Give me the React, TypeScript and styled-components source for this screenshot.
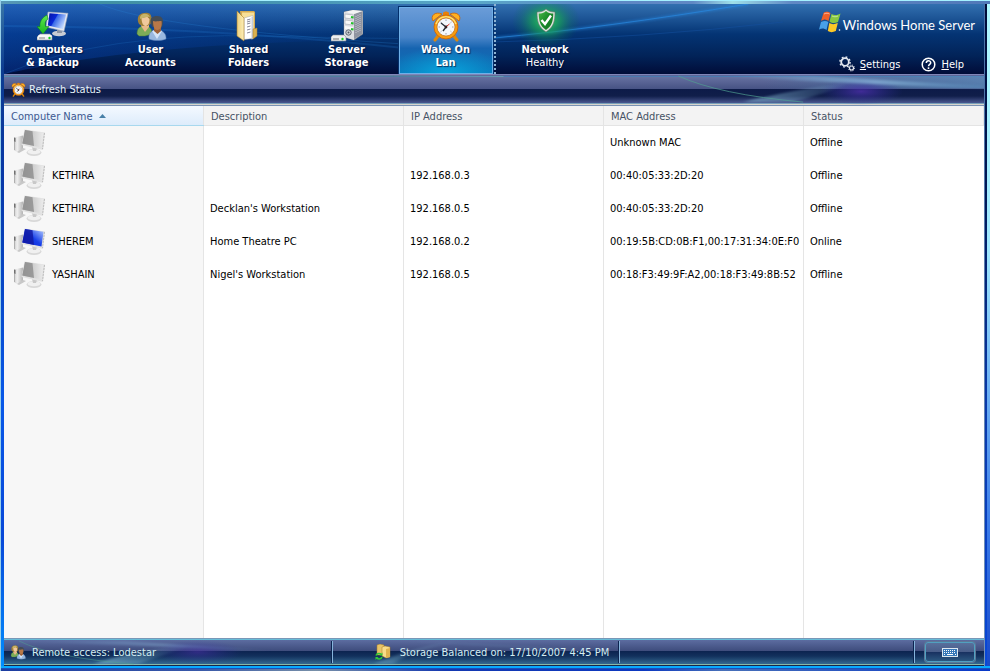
import React from "react";
import styled, { createGlobalStyle, css } from "styled-components";

const GlobalStyle = createGlobalStyle`
  * { box-sizing: border-box; }
  body {
    margin: 0;
    font-family: "DejaVu Sans Condensed", "DejaVu Sans", Tahoma, sans-serif;
    font-size: 11px;
    line-height: 13px;
    color: #000;
  }
  button { font: inherit; color: inherit; border: 0; padding: 0; background: none; cursor: pointer; }
  svg { display: block; flex: none; }
`;

/* ---------- window frame ---------- */

const Frame = styled.div`
  min-height: 100vh;
  display: flex;
  flex-direction: column;
  padding: 4px 6px 5px 4px;
  background:
    linear-gradient(90deg, #98d0ea 0 1px, transparent 1px) left / 4px 100% no-repeat,
    linear-gradient(#a4f0ff 0 1px, transparent 1px) top / 100% 4px no-repeat,
    linear-gradient(90deg, #5898b8 0 2px, #3f8fa0 77px, #4795b4 30%, #5aa8c8 48%, #5c86c4 60%, #6088c4 70%, #9fe0e8 74%, #6088c4 80%, #5078b8) top / 100% 4px no-repeat,
    linear-gradient(#08a8ff 0 2px, #1c50b8 2px 3px, transparent 3px) bottom / 100% 5px no-repeat,
    linear-gradient(90deg, #1c3ca0, #3858a8 20%, #7890a8 32%, #1438b0 45%, #0c38c0 65%, #4870b8 73%, #0838c8) bottom / 100% 3px no-repeat,
    linear-gradient(#b0f8ff, #a0e8ff 250px, #3878e8 80%, #1848c8) 100% 0 / 3px 100% no-repeat,
    linear-gradient(#88e8ff, #68c8ff 250px, #2070e8 80%, #0840d0) 100% 0 / 2px 100% no-repeat,
    linear-gradient(#4870a8, #7894b8) calc(100% - 5px) 0 / 1px 100% no-repeat,
    linear-gradient(#000c38, #001858 200px, #0838a8 400px, #0848d8) 100% 0 / 6px 100% no-repeat,
    linear-gradient(#3a78a8, #0c3c90 70px, #0838a8 180px, #0858e8 400px, #0848d8 80%, #0090ff);
`;

/* ---------- header ---------- */

const Header = styled.header`
  position: relative;
  display: flex;
  justify-content: space-between;
  height: 70px;
  overflow: hidden;
  color: #fff;
  background: linear-gradient(#3270b0, #1d5596 14px, #043474 30px, #022358 52px, #010c38);
`;

const Backdrop = styled.svg`
  position: absolute;
  inset: 0;
  width: 100%;
  height: 100%;
`;

const Nav = styled.nav`
  position: relative;
  display: flex;
`;

const NavButton = styled.button<{ $active?: boolean; $divided?: boolean }>`
  && {
    width: 98px;
    height: 70px;
    display: flex;
    flex-direction: column;
    align-items: center;
    padding: 6px 1px 0 0;
    font-weight: 700;
    text-align: center;
    white-space: pre-line;
    text-shadow: 1px 1px 1px rgba(0, 10, 50, 0.7);
  }
  span { margin-top: 1px; }
  small { font-size: 11px; font-weight: 400; }
  ${(p) =>
    p.$divided &&
    css`
      && {
        width: 100px;
        padding-right: 0;
        border-left: 2px dotted #8fb4d4;
      }
    `}
  ${(p) =>
    p.$active &&
    css`
      && {
        width: 94px;
        height: 67px;
        margin: 3px 1px 0 3px;
        padding-top: 2px;
        border: 1px solid #6fb0e8;
        outline: 1px solid #03306c;
        background:
          radial-gradient(ellipse 60px 26px at 50% 100%, #08a4dc, transparent),
          linear-gradient(#6a9cd8, #4884c8 45%, #1664b0 62%, #0a74b8);
      }
    `}
`;

const Brand = styled.div`
  position: relative;
  display: flex;
  flex-direction: column;
  justify-content: space-between;
  padding: 6px 9px 2px 0;
`;

const Logo = styled.div`
  display: flex;
  align-items: center;
  justify-content: flex-end;
  gap: 2px;
  white-space: nowrap;
`;

const LogoText = styled.span`
  font: 13px/18px Lato, "Open Sans", sans-serif;
  padding-top: 6px;
`;

const Links = styled.div`
  display: flex;
  justify-content: flex-end;
  gap: 21px;
  padding-right: 11px;
`;

const LinkButton = styled.button`
  && {
    display: flex;
    align-items: center;
    gap: 5px;
    height: 16px;
  }
`;

/* ---------- toolbar ---------- */

const Toolbar = styled.div`
  position: relative;
  height: 32px;
  display: flex;
  align-items: center;
  padding: 0 8px 0 7px;
  color: #e6f2f8;
  border-bottom: 1px solid #7892b4;
  background: linear-gradient(#8086b8 0 1px, #5b6598 1px 2px, #4a7ab0 2px 3px, #6670a0 3px, #465284 15px, #0d1b48 15px, #101e4a 22px, #4a5890 29px, #78a0b8 29px 30px, #d8d4cc 30px);
`;

const ToolButton = styled.button`
  && {
    position: relative;
    display: flex;
    align-items: center;
    gap: 3px;
  }
`;

/* ---------- table ---------- */

const Listing = styled.main`
  flex: 1;
  background:
    linear-gradient(#e5e5e5, #e5e5e5) 199px 0 / 1px 100% no-repeat,
    linear-gradient(#e5e5e5, #e5e5e5) 399px 0 / 1px 100% no-repeat,
    linear-gradient(#e5e5e5, #e5e5e5) 599px 0 / 1px 100% no-repeat,
    linear-gradient(#e5e5e5, #e5e5e5) 799px 0 / 1px 100% no-repeat,
    linear-gradient(90deg, #f7f7f7 0 199px, #fff 199px);
`;

const Table = styled.table`
  width: 100%;
  table-layout: fixed;
  border-collapse: collapse;
`;

const HeadCell = styled.th<{ $sorted?: boolean }>`
  width: ${(p) => (p.$sorted !== undefined ? "200px" : "auto")};
  height: 20px;
  padding: 0 7px;
  text-align: left;
  font-weight: 400;
  color: #465264;
  background: ${(p) => (p.$sorted ? "linear-gradient(#f4f9ff, #dcebfb)" : "#f3f3f3")};
  box-shadow: inset 0 -1px 0 ${(p) => (p.$sorted ? "#a8d8ee" : "#e4e4e4")}, inset -1px 0 0 #e4e4e4;
`;

const SortButton = styled.button`
  && {
    display: flex;
    align-items: center;
    gap: 6px;
    color: #3c5890;
  }
`;

const Cell = styled.td`
  height: 33px;
  padding: 0 0 0 6px;
  white-space: nowrap;
`;

const NameCell = styled.div`
  display: flex;
  align-items: center;
  gap: 7px;
  padding-left: 3px;
`;

/* ---------- status bar ---------- */

const StatusBar = styled.footer`
  position: relative;
  display: grid;
  grid-template-columns: 329px 287px 1fr 69px;
  align-items: center;
  height: 28px;
  color: #d4eef2;
  background: linear-gradient(#7898b8 0 1px, #68bcd8 1px 2px, #5c6ca0 2px, #3e4c7c 13px, #0c2350 13px, #12305c 18px, #346890 26px, #88b8a8 26px 27px, #182848 27px);
`;

const StatusItem = styled.div<{ $center?: boolean }>`
  position: relative;
  display: flex;
  align-items: center;
  justify-content: ${(p) => (p.$center ? "center" : "flex-start")};
  gap: ${(p) => (p.$center ? "8px" : "6px")};
  height: 22px;
  padding: ${(p) => (p.$center ? "0 10px 0 42px" : "0 0 0 6px")};
  white-space: nowrap;
  border-right: 1px solid #86b4dc;
  box-shadow: inset -1px 0 0 #0c2450;
`;

const KeyboardButton = styled.button`
  && {
    position: relative;
    display: grid;
    place-items: center;
    justify-self: center;
    width: 50px;
    height: 20px;
    border: 1px solid #50a0c0;
    border-radius: 3px;
    background: linear-gradient(#58709c, #485c88 50%, #183060 50%, #2c5880);
    box-shadow: 0 0 0 1px #5c7898;
  }
`;

/* ---------- icons ---------- */

const BackupIcon = () => (
  <svg width="32" height="32" viewBox="0 0 32 32">
    <defs>
      <linearGradient id="scr" x1="0" y1="0" x2="1" y2="0.5">
        <stop offset="0" stopColor="#0410a0" /><stop offset=".45" stopColor="#0828d8" />
        <stop offset=".5" stopColor="#3868e8" /><stop offset="1" stopColor="#c0d8ff" />
      </linearGradient>
      <linearGradient id="grn" x1="0" y1="0" x2="0" y2="1">
        <stop offset="0" stopColor="#60e850" /><stop offset="1" stopColor="#18b820" />
      </linearGradient>
    </defs>
    <ellipse cx="22" cy="23.500" rx="7" ry="2.800" fill="#c8ccd4" />
    <path d="M20 17l5 1v5h-5z" fill="#8c94a4" />
    <path d="M11 2l20 1.300-4 18L9 17z" fill="#e4e8f0" stroke="#98a4bc" strokeWidth=".6" />
    <path d="M12.500 3.200l16.500 1.300-3 14.500-15.200-3.500z" fill="url(#scr)" />
    <path d="M10 5C4 8 2.500 13 3 16.500H0L6 24l6-7.500H8.500C8 13 8 11 11 9z" fill="url(#grn)" stroke="#087814" strokeWidth=".5" />
    <path d="M1 26l2-2h10l2 2v4H0v-3z" fill="#f0f2f4" stroke="#8c9098" strokeWidth=".6" />
    <path d="M1 26h14" stroke="#fff" /><path d="M2 28h6" stroke="#888" /><circle cx="12.500" cy="28" r="1.200" fill="#18d020" />
  </svg>
);

const UsersIcon = ({ size = 32 }: { size?: number }) => (
  <svg width={size} height={size} viewBox="0 0 32 32">
    <path d="M2 24c0-6 3-8 8-8s7 3 7 8l-7 2H4z" fill="#7cac58" stroke="#4c7c30" strokeWidth=".5" />
    <path d="M6 16l4 6 4-5v-4H7z" fill="#e8b888" />
    <path d="M4 14C1 8 4 2.500 10 3c6-1 8 4 5.500 11l-3 2H7z" fill="#a08038" />
    <path d="M6.500 8c4 0 4-2 5-2l3 3c0 5-2 7-4 7s-4-3-4-8z" fill="#f0c89c" />
    <path d="M5 8c0-5 8-6 10-1-3-1-5 1-7 1s-2 2-3 0z" fill="#c8b468" />
    <path d="M14 29c-1-6 3-9 8.500-9s9 4 8.500 9c-5 2-12 2-17 0z" fill="#98b8e0" stroke="#5880b8" strokeWidth=".5" />
    <path d="M17 21l5 8 5-8-5-2z" fill="#d4e4f8" /><path d="M19 17h7v4l-3.500 3-3.500-3z" fill="#9c6038" />
    <path d="M16 14c-2-6 2-8 6-8 5 0 7 3 5.500 9l-1 3-9-1z" fill="#444c54" />
    <path d="M18 11c3 1 5 0 8.500 0 1 5-1 9-4.200 9S18 16 18 11z" fill="#b87848" />
  </svg>
);

const FoldersIcon = () => (
  <svg width="32" height="32" viewBox="0 0 32 32">
    <defs>
      <linearGradient id="fold" x1="0" x2="1">
        <stop offset="0" stopColor="#ecd080" /><stop offset="1" stopColor="#fff0b8" />
      </linearGradient>
    </defs>
    <path d="M7 1h14l1 1v22H10z" fill="#d8ac50" />
    <path d="M9 2.500h12V26l-11 2z" fill="#f8e098" />
    <path d="M11 8l9-2.500v23l-9 1z" fill="#fff" stroke="#a8a8a8" strokeWidth=".5" />
    <path d="M14 10l3.500-1M14 12l3.500-1M14 14l3.500-1M14 17l3.500-1M14 20l3.500-1M14 23l3.500-1" stroke="#889" />
    <path d="M18.500 7l1.500-.5V29l-1.500.5z" fill="#c4ccd8" />
    <path d="M4 1l7 7v23L4 26z" fill="url(#fold)" stroke="#a87c28" strokeWidth=".6" />
    <path d="M20 19l4-1v8l-4 3z" fill="#d8b050" stroke="#a87c28" strokeWidth=".5" />
  </svg>
);

const ServerIcon = () => (
  <svg width="32" height="32" viewBox="0 0 32 32">
    <path d="M13 2l9-2 10 1v23l-9 6-10-3z" fill="#c0c4c8" stroke="#686c74" strokeWidth=".6" />
    <path d="M23 4l8-3v23l-8 5z" fill="#9094a0" />
    <path d="M13 2l10 1.500V30l-10-3z" fill="#dcdee2" />
    <path d="M14 4l8 1v4l-8-1zM14 10l8 1v4l-8-1z" fill="#f8f8f8" stroke="#989ca4" strokeWidth=".5" />
    <path d="M14 16l8 1v3l-8-1z" fill="#f8f8f8" />
    <path d="M13 2l9-2 10 1-9 3z" fill="#f4f4f4" />
    <path d="M20 7l2.500.5M20 13l2.500.5M20 19l2.500.5" stroke="#20c028" strokeWidth="2" />
    <circle cx="17.500" cy="22.500" r="2.700" fill="#d0d4d8" stroke="#606870" /><circle cx="17.500" cy="22.500" r="1" fill="#505860" />
    <path d="M25 6v18M27 5v18M29 4v18" stroke="#c4c8d0" strokeDasharray="1 1" />
    <path d="M0 27l2-2h11l2 2v4H0z" fill="#eceef0" stroke="#808890" strokeWidth=".6" />
    <path d="M2 29h6" stroke="#777" /><circle cx="11.500" cy="29" r="1.200" fill="#18d020" />
  </svg>
);

const ClockIcon = ({ size = 32 }: { size?: number }) => (
  <svg width={size} height={size} viewBox="0 0 32 32">
    <path d="M8 26l-3 4M24 26l3 4" stroke="#e08808" strokeWidth="3" strokeLinecap="round" />
    <path d="M3 11C0 6 5 1 12 4zM29 11c3-5-2-10-9-7z" fill="#ffb020" stroke="#c86008" strokeWidth=".8" />
    <path d="M13 3c1-2 5-2 6 0v3h-6z" fill="#e88008" />
    <circle cx="16" cy="17" r="12" fill="#f89c10" stroke="#c86008" strokeWidth=".8" />
    <path d="M6 14a10.500 10.500 0 0 1 20 0" fill="none" stroke="#ffe070" strokeWidth="1.500" />
    <circle cx="16" cy="17" r="9" fill="#f4f8fc" stroke="#b87028" strokeWidth=".7" />
    <path d="M16 9.500v1.500M16 23v1.500M8.500 17h1.500M22 17h1.500M10.500 12l1 .8M21.500 12l-1 .8M10.500 22l1-.8M21.500 22l-1-.8" stroke="#889" strokeWidth=".8" />
    <path d="M11 13l5 4-3 4" fill="none" stroke="#283038" strokeWidth="1.400" /><path d="M15 17.500l4.500-3.500" stroke="#d83020" />
    <circle cx="16" cy="17" r="1.400" fill="#382020" />
  </svg>
);

const ShieldIcon = () => (
  <svg width="64" height="32" viewBox="0 0 64 32" overflow="visible">
    <defs>
      <radialGradient id="glow">
        <stop offset="0" stopColor="#30e850" stopOpacity=".9" /><stop offset=".45" stopColor="#18a850" stopOpacity=".6" />
        <stop offset=".75" stopColor="#108058" stopOpacity=".25" /><stop offset="1" stopColor="#087048" stopOpacity="0" />
      </radialGradient>
      <linearGradient id="shield" x1="0" y1="0" x2="1" y2="1"><stop offset="0" stopColor="#48b848" /><stop offset=".5" stopColor="#188828" /><stop offset="1" stopColor="#187828" /></linearGradient>
    </defs>
    <ellipse cx="33" cy="11" rx="34" ry="27" fill="url(#glow)" />
    <path d="M33-1c2 2 5 3 9 3 0 9-1 15-9 20-8-5-9-11-9-20 4 0 7-1 9-3z" fill="#dce4dc" stroke="#607068" strokeWidth=".6" />
    <path d="M33 1c2 2 4 2.500 7.300 2.600C40 11 39 16 33 20c-6-4-7-9-7.300-16.400C29 3.500 31 3 33 1z" fill="url(#shield)" />
    <path d="M28.500 10l3.500 4L38 5.500" fill="none" stroke="#fff" strokeWidth="2.400" />
  </svg>
);

const WindowsIcon = () => (
  <svg width="22" height="22" viewBox="0 0 22 22">
    <path d="M4.500 2c3-2 5-1 7 0L9.500 10C7 8 5 8 2 10z" fill="#f06028" />
    <path d="M12.500 3c3 1.500 5 1.500 9-.5L19 11c-3 1.500-6 1.500-8.500-.5z" fill="#88c840" />
    <path d="M2 11c3-1.500 5-1.500 7.300 0L7.500 19C5 17 3 17 0 18.500z" fill="#48a0e8" />
    <path d="M10.300 12c2.500 1.500 5 1.500 8.500 0l-2 8c-3 1.500-5.500 1.500-8 0z" fill="#fcc828" />
    <path d="M5 3c2-1 4-1 5.500 0M13 5c2 1 4 1 6 0" stroke="#fff" strokeOpacity=".5" fill="none" />
    <circle cx="20.500" cy="19" r=".8" fill="#fff" />
  </svg>
);

const GearsIcon = () => (
  <svg width="16" height="16" viewBox="0 0 16 16" fill="none" stroke="#e4e8f0">
    <circle cx="6" cy="6" r="3.800" strokeWidth="1.800" />
    <circle cx="6" cy="6" r="5.100" strokeWidth="1.400" strokeDasharray="1.800 2.205" />
    <circle cx="12.500" cy="12" r="2" strokeWidth="1.200" />
    <circle cx="12.500" cy="12" r="3" strokeDasharray="1.100 1.256" />
  </svg>
);

const HelpIcon = () => (
  <svg width="15" height="15" viewBox="0 0 15 15" fill="none" stroke="#fff">
    <circle cx="7.500" cy="7.500" r="6.300" strokeWidth="1.500" />
    <path d="M5.300 6c0-3 4.400-2.900 4.400-.3 0 1.700-2.200 1.700-2.200 3.500" strokeWidth="1.500" />
    <path d="M7.500 10.300v1.700" strokeWidth="1.600" />
  </svg>
);

const ComputerIcon = ({ online }: { online: boolean }) => (
  <svg width="32" height="28" viewBox="0 0 32 28">
    <defs>
      <linearGradient id="off" x1="0" x2="1"><stop offset="0" stopColor="#b0b0b0" /><stop offset="1" stopColor="#ececec" /></linearGradient>
      <linearGradient id="on" x1="0" y1="1" x2="1" y2="0"><stop offset="0" stopColor="#0820d8" /><stop offset=".5" stopColor="#1840e8" /><stop offset="1" stopColor="#b8d0ff" /></linearGradient>
      <linearGradient id="tower" x1="0" x2="1"><stop offset="0" stopColor="#c8c8c8" /><stop offset=".35" stopColor="#f0f0f0" /><stop offset="1" stopColor="#b4b4b4" /></linearGradient>
    </defs>
    <path d="M1 8.500L10 6.500V21l-6 2-3-2z" fill="url(#tower)" />
    <path d="M1 8.500l1.500.5v4L1 12.500z" fill="#707070" />
    <path d="M1.500 13v8" stroke="#a8a8a8" strokeWidth=".8" />
    <path d="M4 23l6-4 3 1-7 4z" fill="#c8c8c8" />
    <ellipse cx="21" cy="23.500" rx="7.500" ry="3.500" fill="#d8d8d8" />
    <ellipse cx="21" cy="22.800" rx="6.500" ry="2.500" fill="#f0f0f0" />
    <path d="M19 18l5 1-1 3h-3z" fill="#c8c8c8" />
    <path d="M11.500.5L32 3.500 30 21 8.500 16z" fill="#e2e2e2" />
    <path d="M12 1l18.500 2.800L28.500 18.500 9.300 14.500z" fill={online ? "url(#on)" : "url(#off)"} />
    <path d="M12 1l7.500 1.200L21 17 9.300 14.500z" fill={online ? "#1018a0" : "#8c8c8c"} opacity=".8" />
    <path d="M31.500 4l-2 16" stroke="#b4b4b4" strokeWidth=".8" strokeDasharray="2 1" />
  </svg>
);

const BalanceIcon = () => (
  <svg width="17" height="16" viewBox="0 0 17 16">
    <path d="M2 1l3-1 4 1v10H2z" fill="#e8c468" stroke="#a87c28" strokeWidth=".5" />
    <path d="M7 3l3-1 5 1v10l-4 1-4-2z" fill="#f8dc88" stroke="#a87c28" strokeWidth=".5" />
    <path d="M11 5l4-1v9l-4 1z" fill="#e0b450" />
    <path d="M1 11.500c1-2.500 4-2.500 5-1M7 13c-1 2.500-4 2.500-5 1" stroke="#30c838" strokeWidth="1.600" fill="none" />
    <path d="M4.500 11.500h3v-3zM3.500 13H.5v3z" fill="#30c838" />
  </svg>
);

const KeyboardIcon = () => (
  <svg width="16" height="9" viewBox="0 0 16 9">
    <rect x=".5" y=".5" width="15" height="8" fill="#3878b8" stroke="#dce8f0" />
    <path d="M2 2.500h12M2 4.500h12" stroke="#fff" strokeDasharray="1 1" /><path d="M2 6.500h1M5 6.500h6M13 6.500h1" stroke="#fff" />
  </svg>
);

/* ---------- decorative light trails ---------- */

const HeaderTrails = () => (
  <Backdrop viewBox="0 0 981 70" preserveAspectRatio="none" aria-hidden="true">
    <defs>
      <linearGradient id="left" x1="0" x2="1"><stop offset="0" stopColor="#0848c0" stopOpacity=".65" /><stop offset="1" stopColor="#0848c0" stopOpacity="0" /></linearGradient>
      <filter id="soft" x="-10%" y="-60%" width="120%" height="220%"><feGaussianBlur stdDeviation="2 1" /></filter>
    </defs>
    <path d="M0 0h400v36Q150 36 0 70z" fill="url(#left)" opacity=".6" />
    <g fill="none" stroke="#2888e0">
      <path d="M96 0Q150 24 400 40" opacity=".25" />
      <path d="M0 22Q220 24 400 44" opacity=".2" strokeWidth="2" />
      <path d="M0 70Q100 28 260 32T490 34" opacity=".2" />
      <path d="M490 34Q600 24 745 0" strokeWidth="3" opacity=".4" filter="url(#soft)" />
      <path d="M490 34Q600 24 745 0" opacity=".7" />
      <path d="M490 38Q640 34 780 18" stroke="#1450a0" opacity=".5" />
    </g>
  </Backdrop>
);

const ToolbarTrails = () => (
  <Backdrop viewBox="0 0 981 32" preserveAspectRatio="none" aria-hidden="true">
    <defs>
      <radialGradient id="violet"><stop offset="0" stopColor="#5030b0" stopOpacity=".75" /><stop offset="1" stopColor="#3030a0" stopOpacity="0" /></radialGradient>
      <linearGradient id="beam" x1="0" x2="1"><stop offset="0" stopColor="#78b0dc" stopOpacity="0" /><stop offset=".6" stopColor="#98c8e8" stopOpacity=".6" /><stop offset="1" stopColor="#6098c8" stopOpacity=".25" /></linearGradient>
      <linearGradient id="wash" x1="0" x2="1"><stop offset="0" stopColor="#2c78a8" stopOpacity="0" /><stop offset="1" stopColor="#5890c0" stopOpacity=".6" /></linearGradient>
      <linearGradient id="streak" x1="0" x2="1"><stop offset="0" stopColor="#90c8e0" stopOpacity=".7" /><stop offset="1" stopColor="#90c8e0" stopOpacity="0" /></linearGradient>
    </defs>
    <path d="M760 2h221v13H760z" fill="url(#wash)" />
    <ellipse cx="858" cy="18" rx="42" ry="14" fill="url(#violet)" />
    <path d="M710 1l100 1 171 10v3Q800 8 710 1z" fill="url(#beam)" filter="url(#soft)" />
    <path d="M740 29Q790 16 850 8 820 21 790 29z" fill="url(#streak)" opacity=".8" filter="url(#soft)" />
    <path d="M675 2Q715 21 800 29" stroke="#50a090" opacity=".7" fill="none" />
    <path d="M0 2h390l110 .5" stroke="#80c0b0" opacity=".5" />
  </Backdrop>
);

const StatusTrails = () => (
  <Backdrop viewBox="0 0 981 28" preserveAspectRatio="none" aria-hidden="true">
    <path d="M10 3h110l150 10Q120 7 10 3z" fill="url(#beam)" opacity=".6" filter="url(#soft)" />
    <path d="M90 26Q130 12 190 7 150 20 135 26z" fill="url(#streak)" opacity=".8" filter="url(#soft)" />
    <ellipse cx="194" cy="14" rx="45" ry="12" fill="url(#violet)" opacity=".7" />
    <path d="M15 3Q50 20 130 26" stroke="#50a090" opacity=".5" fill="none" />
    <path d="M370 26Q410 9 450 3h10Q405 12 390 26z" fill="url(#streak)" opacity=".5" filter="url(#soft)" />
    <path d="M400 3l200 9v3Q500 8 400 3z" fill="url(#streak)" opacity=".5" filter="url(#soft)" />
  </Backdrop>
);

/* ---------- page ---------- */

const tabs = [
  { label: "Computers\n& Backup", icon: <BackupIcon /> },
  { label: "User\nAccounts", icon: <UsersIcon /> },
  { label: "Shared\nFolders", icon: <FoldersIcon /> },
  { label: "Server\nStorage", icon: <ServerIcon /> },
  { label: "Wake On\nLan", icon: <ClockIcon />, active: true },
];

const computers = [
  { name: "", description: "", ip: "", mac: "Unknown MAC", status: "Offline" },
  { name: "KETHIRA", description: "", ip: "192.168.0.3", mac: "00:40:05:33:2D:20", status: "Offline" },
  { name: "KETHIRA", description: "Decklan's Workstation", ip: "192.168.0.5", mac: "00:40:05:33:2D:20", status: "Offline" },
  { name: "SHEREM", description: "Home Theatre PC", ip: "192.168.0.2", mac: "00:19:5B:CD:0B:F1,00:17:31:34:0E:F0", status: "Online" },
  { name: "YASHAIN", description: "Nigel's Workstation", ip: "192.168.0.5", mac: "00:18:F3:49:9F:A2,00:18:F3:49:8B:52", status: "Offline" },
];

export default function App() {
  return (
    <>
      <GlobalStyle />
      <Frame>
        <Header>
          <HeaderTrails />
          <Nav>
            {tabs.map((tab) => (
              <NavButton key={tab.label} $active={tab.active} aria-current={tab.active ? "page" : undefined}>
                {tab.icon}
                <span>{tab.label}</span>
              </NavButton>
            ))}
            <NavButton $divided>
              <ShieldIcon />
              <span>Network</span>
              <small>Healthy</small>
            </NavButton>
          </Nav>
          <Brand>
            <Logo>
              <WindowsIcon />
              <LogoText>Windows Home Server</LogoText>
            </Logo>
            <Links>
              <LinkButton><GearsIcon /><span><u>S</u>ettings</span></LinkButton>
              <LinkButton><HelpIcon /><span><u>H</u>elp</span></LinkButton>
            </Links>
          </Brand>
        </Header>

        <Toolbar>
          <ToolbarTrails />
          <ToolButton><ClockIcon size={15} />Refresh Status</ToolButton>
        </Toolbar>

        <Listing>
          <Table>
            <thead>
              <tr>
                <HeadCell $sorted aria-sort="ascending">
                  <SortButton>
                    Computer Name
                    <svg width="7" height="4" viewBox="0 0 7 4"><path d="M0 4l3.500-4L7 4z" fill="#4880a8" /></svg>
                  </SortButton>
                </HeadCell>
                <HeadCell $sorted={false}>Description</HeadCell>
                <HeadCell $sorted={false}>IP Address</HeadCell>
                <HeadCell $sorted={false}>MAC Address</HeadCell>
                <HeadCell>Status</HeadCell>
              </tr>
            </thead>
            <tbody>
              {computers.map((c, i) => (
                <tr key={i}>
                  <Cell>
                    <NameCell><ComputerIcon online={c.status === "Online"} />{c.name}</NameCell>
                  </Cell>
                  <Cell>{c.description}</Cell>
                  <Cell>{c.ip}</Cell>
                  <Cell>{c.mac}</Cell>
                  <Cell>{c.status}</Cell>
                </tr>
              ))}
            </tbody>
          </Table>
        </Listing>

        <StatusBar>
          <StatusTrails />
          <StatusItem><UsersIcon size={16} />Remote access: Lodestar</StatusItem>
          <StatusItem $center><BalanceIcon />Storage Balanced on: 17/10/2007 4:45 PM</StatusItem>
          <StatusItem />
          <KeyboardButton aria-label="On-screen keyboard"><KeyboardIcon /></KeyboardButton>
        </StatusBar>
      </Frame>
    </>
  );
}
